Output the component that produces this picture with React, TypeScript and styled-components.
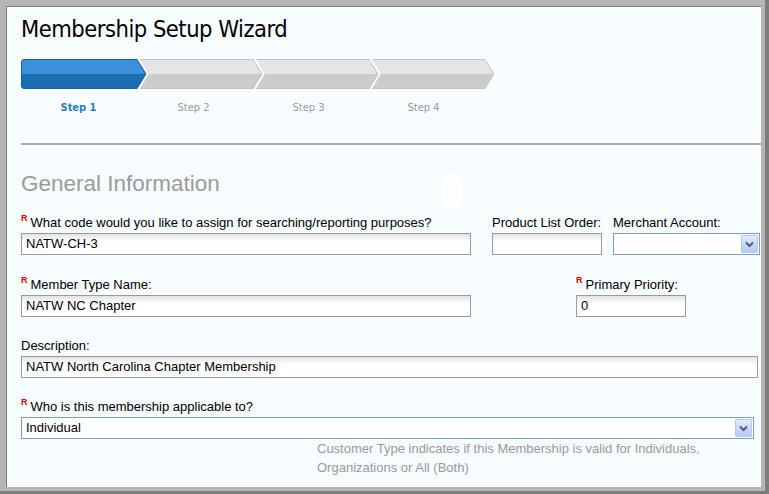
import React from "react";
import styled, { createGlobalStyle } from "styled-components";

const Global = createGlobalStyle`
  html, body { margin: 0; padding: 0; }
  body { background: #ffffff; }
`;

const Frame = styled.div`
  width: 769px;
  height: 494px;
  box-sizing: border-box;
  background: #b5b5b5;
  border-right: 4px solid #7d7d7d;
  border-bottom: 3px solid #7d7d7d;
  padding: 6px 4px 4px 6px;
  display: flex;
`;

const Panel = styled.div`
  flex: 1;
  position: relative;
  background: #f7fcfe;
  border-top: 1px solid #7d7d7d;
  border-left: 1px solid #7d7d7d;
  padding: 8px 0 0 14px;
  display: flex;
  flex-direction: column;
  font-family: "Liberation Sans", Arial, sans-serif;
  font-size: 13px;
  color: #000;
  overflow: hidden;
`;

const Title = styled.h1`
  margin: 0;
  font-family: "DejaVu Sans Condensed", "DejaVu Sans", sans-serif;
  font-weight: normal;
  font-size: 23.5px;
  letter-spacing: -0.5px;
  line-height: 28px;
  color: #000;
`;

const StepsWrap = styled.div`
  margin-top: 16px;
  display: flex;
  flex-direction: column;
`;

const StepLabels = styled.div`
  display: flex;
  margin-top: 12px;
`;

const StepLabel = styled.div<{ $active?: boolean }>`
  width: 115px;
  text-align: center;
  font-family: "DejaVu Sans Condensed", "DejaVu Sans", sans-serif;
  font-size: 11px;
  line-height: 14px;
  font-weight: ${(p) => (p.$active ? "bold" : "normal")};
  color: ${(p) => (p.$active ? "#2e7cc0" : "#9a9a9a")};
`;

const Rule = styled.hr`
  margin: 28px 0 0 0;
  border: none;
  height: 2px;
  background: #a9a9a9;
`;

const SectionTitle = styled.h2`
  margin: 26px 0 0 0;
  font-weight: normal;
  font-size: 22.5px;
  line-height: 26px;
  color: #9b9b9b;
`;

const Row = styled.div<{ $top: number }>`
  display: flex;
  align-items: flex-start;
  margin-top: ${(p) => p.$top}px;
`;

const Field = styled.div<{ $width: number; $left?: number }>`
  width: ${(p) => p.$width}px;
  margin-left: ${(p) => p.$left ?? 0}px;
  display: flex;
  flex-direction: column;
`;

const Label = styled.div`
  height: 15px;
  line-height: 15px;
  margin-bottom: 3px;
  white-space: nowrap;
  color: #000;
`;

const Req = styled.sup`
  color: #e00000;
  font-size: 9px;
  font-weight: bold;
  vertical-align: 6px;
  line-height: 0;
  margin-right: 3px;
`;

const TextBox = styled.div`
  box-sizing: border-box;
  height: 22px;
  border: 1px solid #9a9a9a;
  background: linear-gradient(to bottom, #e2e2e2 0px, #f3f3f3 4px, #ffffff 8px, #ffffff 100%);
  padding: 0 4px;
  line-height: 20px;
  white-space: nowrap;
  overflow: hidden;
`;

const SelectBox = styled.div`
  box-sizing: border-box;
  height: 22px;
  border: 1px solid #7f9db9;
  background: #ffffff;
  padding: 0 1px 0 4px;
  display: flex;
  align-items: center;
  justify-content: space-between;
  line-height: 20px;
`;

const DropButton = styled.div`
  box-sizing: border-box;
  width: 17px;
  height: 18px;
  border: 1px solid #b7c9ef;
  border-radius: 1px;
  background: linear-gradient(to bottom, #e3ebfc 0%, #c5d5f7 60%, #b8cbf3 100%);
  display: flex;
  align-items: center;
  justify-content: center;
`;

const Help = styled.div`
  margin: 0 0 0 296px;
  color: #9a9a9a;
  line-height: 19px;
`;

const Blob = styled.div`
  position: absolute;
  left: 434px;
  top: 166px;
  width: 22px;
  height: 36px;
  border-radius: 50% 50% 45% 45%;
  background: #ffffff;
`;

const Chevron = () => (
  <svg width="9" height="7" viewBox="0 0 9 7">
    <path d="M1 1.5 L4.5 5 L8 1.5" fill="none" stroke="#4a5d85" strokeWidth="2" />
  </svg>
);

const Select: React.FC<{ value?: string }> = ({ value }) => (
  <SelectBox>
    <span>{value ?? ""}</span>
    <DropButton>
      <Chevron />
    </DropButton>
  </SelectBox>
);

const Required = () => <Req>R</Req>;

const SEG = 116;
const TIP = 9;
const H = 30;

const StepBar: React.FC<{ count: number; active: number }> = ({ count, active }) => {
  const segs = [];
  for (let i = count - 1; i >= 0; i--) {
    const l = i * SEG;
    const r = l + SEG;
    const t = r + TIP;
    const on = i === active;
    const first = i === 0;
    const outline = first
      ? `M${l + 3},0.5 L${r},0.5 L${t},15 L${r},${H - 0.5} L${l + 3},${H - 0.5} Q${l + 0.5},${H - 0.5} ${l + 0.5},${H - 3} L${l + 0.5},3 Q${l + 0.5},0.5 ${l + 3},0.5 Z`
      : `M${l},0.5 L${r},0.5 L${t},15 L${r},${H - 0.5} L${l},${H - 0.5} Z`;
    const topHalf = first
      ? `M${l + 3},1 L${r},1 L${t - 1},15 L${l + 1},15 L${l + 1},3 Q${l + 1},1 ${l + 3},1 Z`
      : `M${l},1 L${r},1 L${t - 1},15 L${l},15 Z`;
    segs.push(
      <g key={i}>
        <path d={`M${r + 1.5},0 L${t + 1.5},15 L${r + 1.5},${H}`} fill="none" stroke="#ffffff" strokeWidth="2" />
        <path d={outline} fill={on ? "#1b6db1" : "#cccccc"} stroke={on ? "#1963a3" : "#c4c4c4"} strokeWidth="1" />
        <path d={topHalf} fill={on ? "#3b90d9" : "#e5e5e5"} />
      </g>
    );
  }
  return (
    <svg width={count * SEG + TIP + 4} height={H} viewBox={`0 0 ${count * SEG + TIP + 4} ${H}`}>
      {segs}
    </svg>
  );
};

export default function App() {
  const steps = ["Step 1", "Step 2", "Step 3", "Step 4"];
  return (
    <>
      <Global />
      <Frame>
        <Panel>
          <Title>Membership Setup Wizard</Title>
          <StepsWrap>
            <StepBar count={4} active={0} />
            <StepLabels>
              {steps.map((s, i) => (
                <StepLabel key={s} $active={i === 0}>
                  {s}
                </StepLabel>
              ))}
            </StepLabels>
          </StepsWrap>
          <Rule />
          <SectionTitle>General Information</SectionTitle>
          <Blob />
          <Row $top={18}>
            <Field $width={450}>
              <Label>
                <Required />
                What code would you like to assign for searching/reporting purposes?
              </Label>
              <TextBox>NATW-CH-3</TextBox>
            </Field>
            <Field $width={110} $left={21}>
              <Label>Product List Order:</Label>
              <TextBox />
            </Field>
            <Field $width={147} $left={11}>
              <Label>Merchant Account:</Label>
              <Select />
            </Field>
          </Row>
          <Row $top={22}>
            <Field $width={450}>
              <Label>
                <Required />
                Member Type Name:
              </Label>
              <TextBox>NATW NC Chapter</TextBox>
            </Field>
            <Field $width={110} $left={105}>
              <Label>
                <Required />
                Primary Priority:
              </Label>
              <TextBox>0</TextBox>
            </Field>
          </Row>
          <Row $top={21}>
            <Field $width={737}>
              <Label>Description:</Label>
              <TextBox>NATW North Carolina Chapter Membership</TextBox>
            </Field>
          </Row>
          <Row $top={21}>
            <Field $width={733}>
              <Label>
                <Required />
                Who is this membership applicable to?
              </Label>
              <Select value="Individual" />
            </Field>
          </Row>
          <Help>
            Customer Type indicates if this Membership is valid for Individuals,
            <br />
            Organizations or All (Both)
          </Help>
        </Panel>
      </Frame>
    </>
  );
}
